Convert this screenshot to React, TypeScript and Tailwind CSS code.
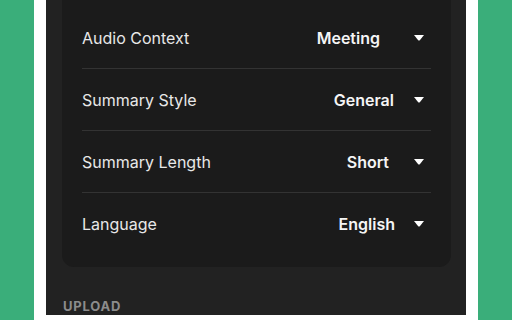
import React from "react";

// ── Settings row ──────────────────────────────────────────────────────────────
function SettingRow({
  label,
  value,
  gap,
  last = false,
}: {
  label: string;
  value: string;
  gap: string;
  last?: boolean;
}) {
  return (
    <div
      className={`flex h-[62px] items-center justify-between ${
        last ? "" : "border-b border-[#333333]"
      }`}
    >
      <span className="text-[16px] text-[#e8e8e8]">{label}</span>
      {/* native-select look: value sits left inside a box sized to its longest option */}
      <div className="flex items-center">
        <span className={`text-[16px] font-semibold text-[#f5f5f5] ${gap}`}>{value}</span>
        <svg width="10" height="6" viewBox="0 0 10 6" className="mr-[7px]">
          <path d="M0 0 H10 L5.8 5.2 Q5 6 4.2 5.2 Z" fill="#ffffff" />
        </svg>
      </div>
    </div>
  );
}

export default function App() {
  return (
    <div
      className="flex h-[320px] w-[512px] overflow-hidden bg-[#3aae7a] px-[34px]"
      style={{ fontFamily: "Inter, 'Noto Sans', sans-serif" }}
    >
      <div className="flex-1 bg-white px-[12px]">
        <div className="h-full bg-[#222222] pl-[16px] pr-[15px]">
          {/* Options card */}
          <div className="-mt-[5px] rounded-b-[12px] bg-[#1b1b1b] px-[20px] pt-[12px] pb-[12px]">
            <SettingRow label="Audio Context" value="Meeting" gap="mr-[34px]" />
            <SettingRow label="Summary Style" value="General" gap="mr-[20px]" />
            <SettingRow label="Summary Length" value="Short" gap="mr-[25px]" />
            <SettingRow label="Language" value="English" gap="mr-[19px]" last />
          </div>

          <p className="mt-[31px] pl-px text-[13px] font-bold tracking-[0.8px] text-[#8c8c8c] leading-4">
            UPLOAD
          </p>
        </div>
      </div>
    </div>
  );
}
